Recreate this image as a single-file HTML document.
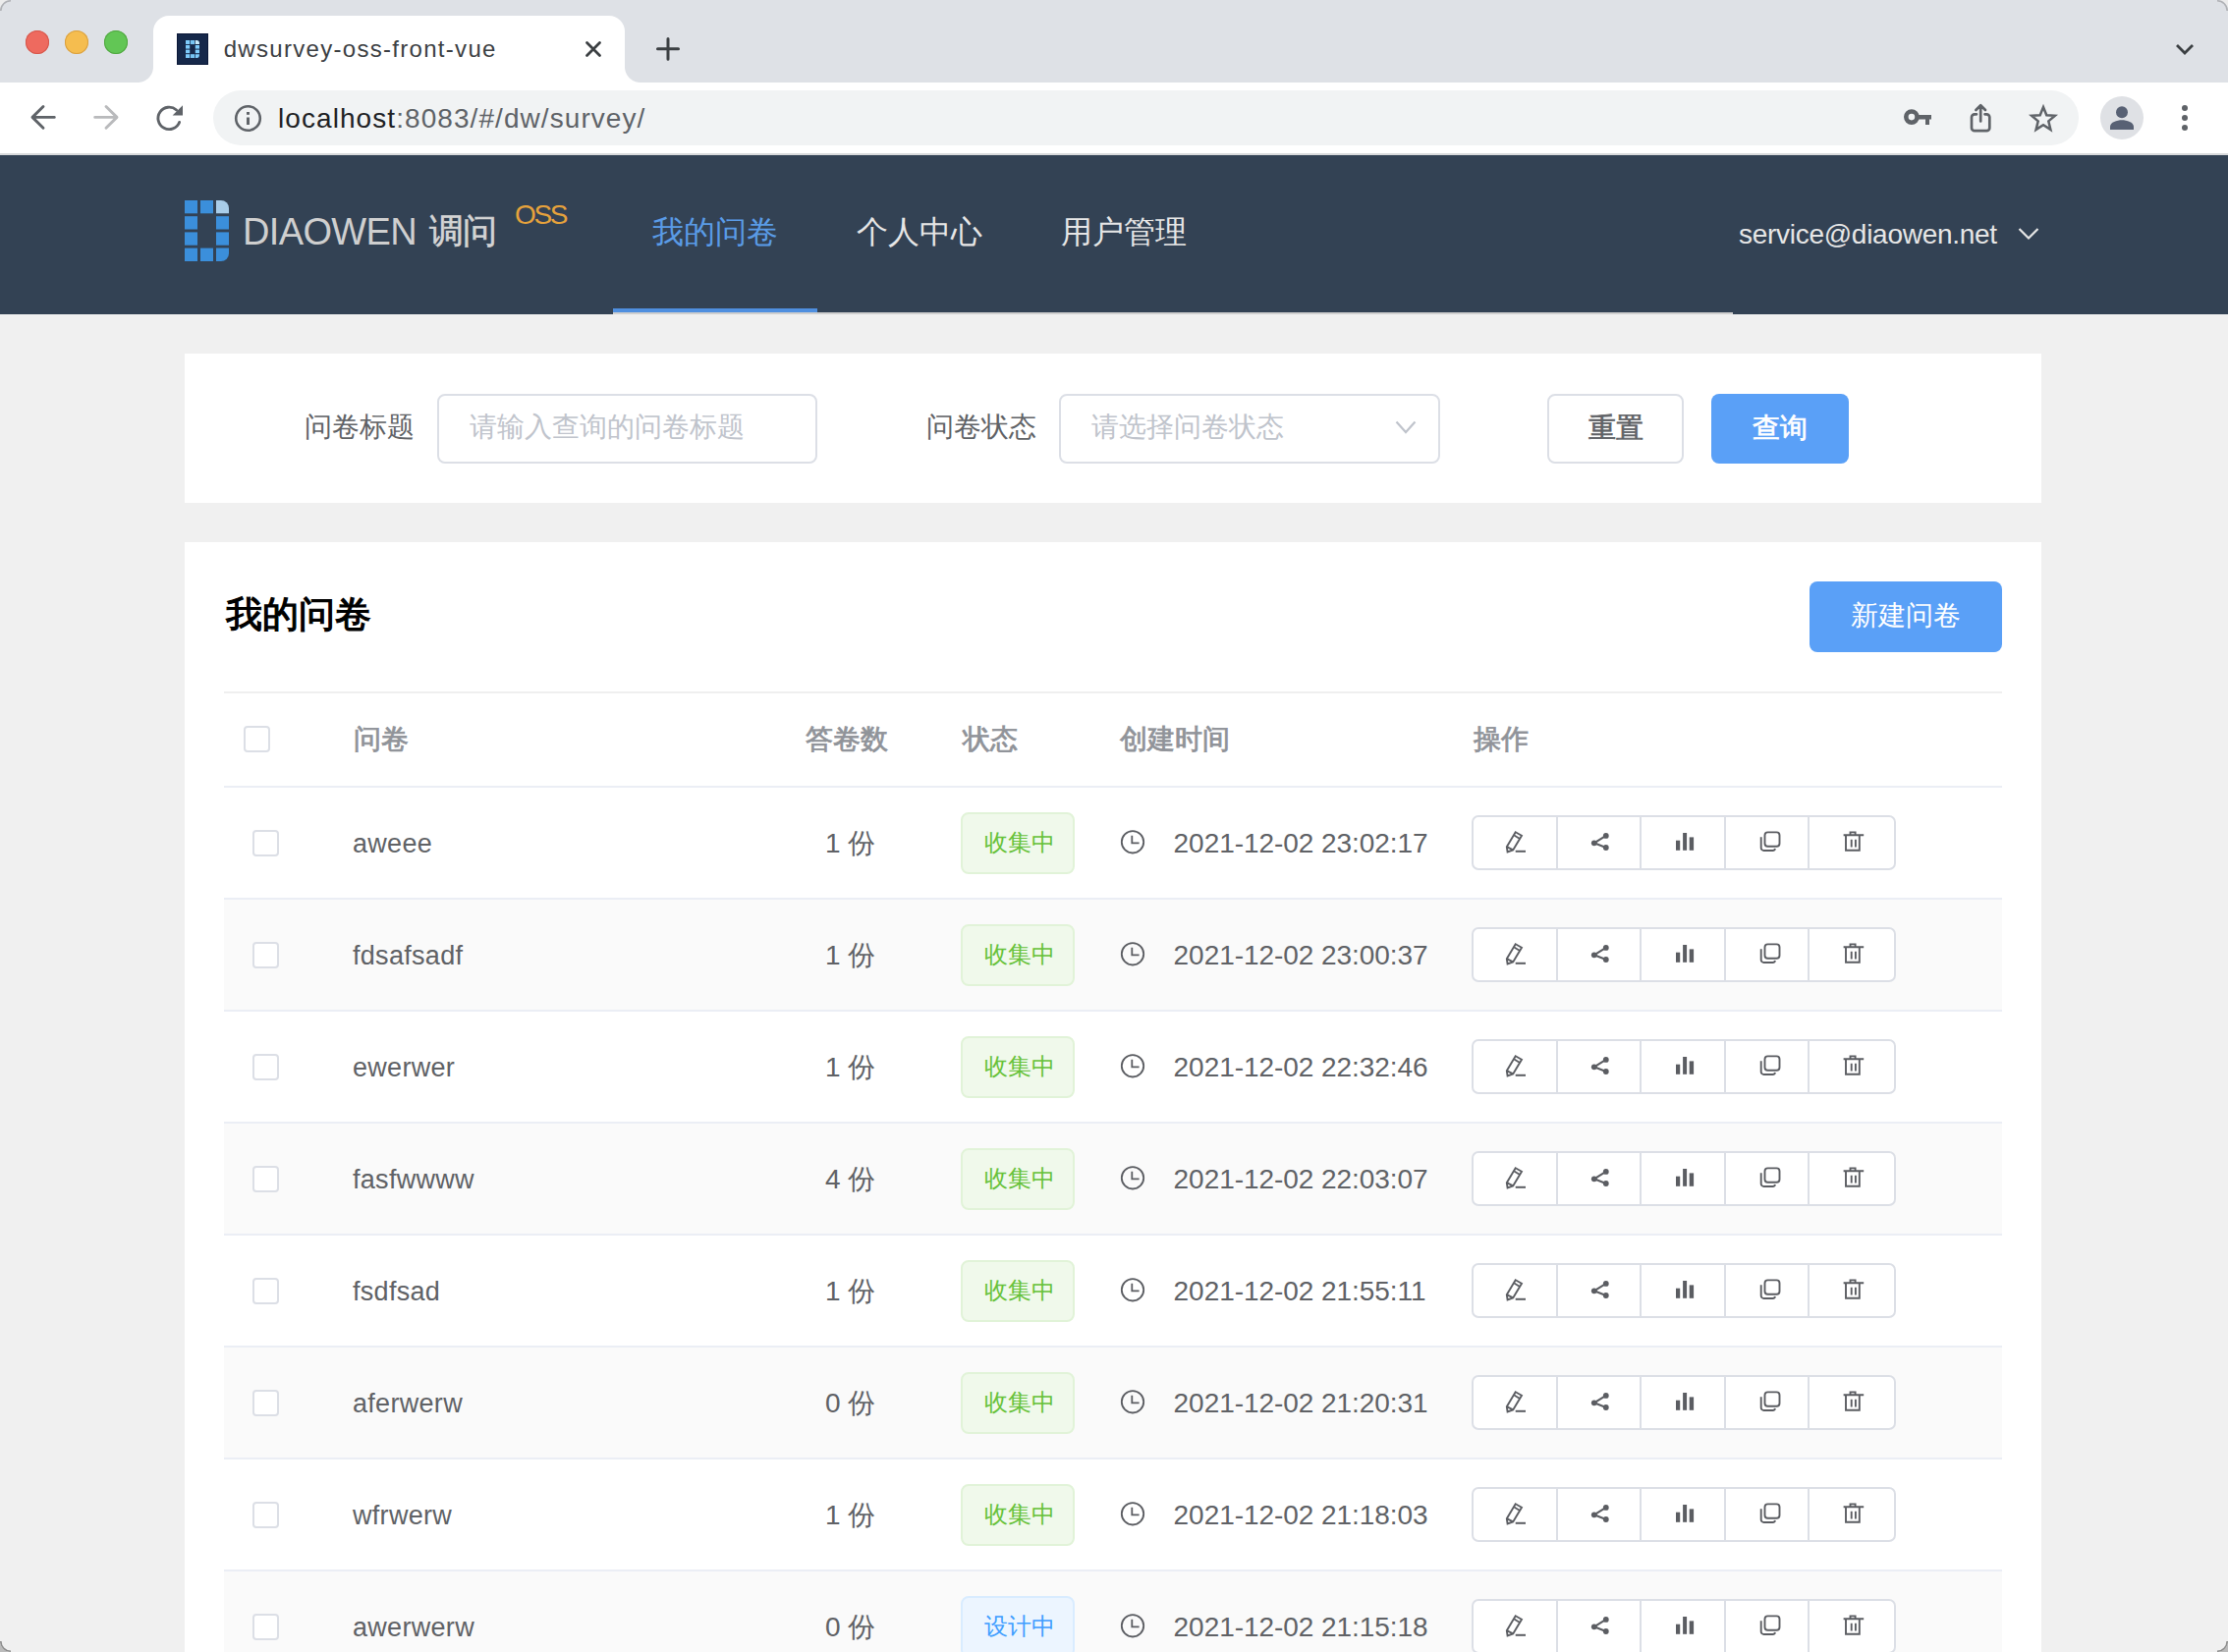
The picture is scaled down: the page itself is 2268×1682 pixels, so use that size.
<!DOCTYPE html>
<html><head><meta charset="utf-8">
<style>
*{box-sizing:border-box;margin:0;padding:0}
html,body{width:2268px;height:1682px;overflow:hidden;background:#f0f0f0;font-family:"Liberation Sans",sans-serif}
.a{position:absolute}
.t{white-space:nowrap}
.card{background:#fff}
.inp{border:2px solid #dcdfe6;border-radius:8px;background:#fff}
.row{left:228px;width:1810px;height:114px;border-bottom:2px solid #ebeef5}
.cb{width:27px;height:27px;border:2px solid #dcdfe6;border-radius:4px;background:#fff}
.tag{width:116px;height:63px;border-radius:8px;border:2px solid #e1f3d8;background:#f0f9eb}
.tag.b{border-color:#d9ecff;background:#ecf5ff}
.grp{width:432px;height:56px;border:2px solid #dcdfe6;border-radius:7px;background:#fff;display:flex}
.grp div{width:86px;border-right:2px solid #dcdfe6}
.grp div:last-child{border-right:none}

</style></head><body>

<div class="a" style="left:0;top:0;width:2268px;height:84px;background:#dee1e6"></div>
<div class="a" style="left:26px;top:31px;width:24px;height:24px;border-radius:50%;background:#ee6a5f;box-shadow:inset 0 0 0 1px #d5574c"></div>
<div class="a" style="left:66px;top:31px;width:24px;height:24px;border-radius:50%;background:#f5bd4f;box-shadow:inset 0 0 0 1px #d9a040"></div>
<div class="a" style="left:106px;top:31px;width:24px;height:24px;border-radius:50%;background:#62c655;box-shadow:inset 0 0 0 1px #50a640"></div>
<div class="a" style="left:156px;top:16px;width:480px;height:68px;background:#fff;border-radius:16px 16px 0 0"></div>
<div class="a" style="left:140px;top:68px;width:16px;height:16px;background:radial-gradient(circle at 0 0,#dee1e6 15.5px,#fff 16.5px)"></div>
<div class="a" style="left:636px;top:68px;width:16px;height:16px;background:radial-gradient(circle at 100% 0,#dee1e6 15.5px,#fff 16.5px)"></div>
<div class="a" style="left:180px;top:34px;width:32px;height:32px;background:#16284a;box-shadow:inset 0 0 0 1px #0b1838"></div>
<svg class="a" style="left:189px;top:40.8px" width="14" height="18.2" viewBox="0 0 14 18.2"><rect x="0" y="0" width="4.2" height="4.1" fill="#7ecbfb"/><rect x="4.9" y="0" width="4.2" height="4.1" fill="#77c4f3"/><path d="M9.8 0H11A3 3 0 0 1 14 3V4.1H9.8Z" fill="#c8ecfd"/><rect x="0" y="5" width="4.2" height="3.6" fill="#7ecbfb"/><rect x="9.8" y="5" width="4.2" height="3.6" fill="#7ecbfb"/><rect x="0" y="9.6" width="4.2" height="3.6" fill="#7ecbfb"/><rect x="9.8" y="9.6" width="4.2" height="3.6" fill="#7ecbfb"/><rect x="0" y="14.2" width="4.2" height="4" fill="#7ecbfb"/><rect x="4.9" y="14.2" width="4.2" height="4" fill="#77c4f3"/><path d="M9.8 14.2H14V15A3.2 3.2 0 0 1 10.8 18.2H9.8Z" fill="#7ecbfb"/></svg>
<div class="a t" style="left:227.7px;top:32.68px;font-size:24px;line-height:34px;color:#3c4043;letter-spacing:1.3px;font-weight:400;">dwsurvey-oss-front-vue</div>
<div class="a" style="left:0;top:84px;width:2268px;height:74px;background:#fff;border-bottom:2px solid #d9dadc"></div>
<div class="a" style="left:217px;top:92px;width:1899px;height:56px;background:#f1f3f4;border-radius:28px"></div>
<svg class="a" style="left:0;top:0" width="2268" height="160" viewBox="0 0 2268 160"><path d="M597.5 43.5L610.5 56.5M610.5 43.5L597.5 56.5" stroke="#3c4043" stroke-width="2.8" stroke-linecap="round"/><path d="M680 39.5V60.3M669.5 49.8H690.5" stroke="#3c4043" stroke-width="3" stroke-linecap="round"/><path d="M2216 46L2224 54L2232 46" fill="none" stroke="#3c4043" stroke-width="2.8"/><path d="M44 108.5L33 119.4L44 130.3M33.5 119.4H55.3" fill="none" stroke="#5f6368" stroke-width="2.9" stroke-linecap="round" stroke-linejoin="round"/><path d="M108 108.5L119 119.4L108 130.3M118.5 119.4H96.7" fill="none" stroke="#b9babc" stroke-width="2.9" stroke-linecap="round" stroke-linejoin="round"/><path d="M182.6 124.4A11.2 11.2 0 1 1 179.6 112" fill="none" stroke="#5f6368" stroke-width="2.9" stroke-linecap="round"/><path d="M186 107.3V117.6H175.6Z" fill="#5f6368"/></svg>
<svg class="a" style="left:238px;top:106px" width="29" height="29" viewBox="0 0 29 29"><circle cx="14.5" cy="14.5" r="12.3" fill="none" stroke="#5f6368" stroke-width="2.6"/><rect x="13" y="13.5" width="3" height="7.5" fill="#5f6368"/><rect x="13" y="8" width="3" height="2.8" fill="#5f6368"/></svg>
<div class="a t" style="left:283px;top:101.00px;font-size:28px;line-height:39px;color:#202124;letter-spacing:1.07px;font-weight:400;">localhost<span style="color:#5f6368">:8083/#/dw/survey/</span></div>
<svg class="a" style="left:1936px;top:106px" width="32" height="26" viewBox="0 0 32 26"><circle cx="9.9" cy="13.1" r="5.6" fill="none" stroke="#5f6368" stroke-width="4.6"/><path d="M15 10.9H30V15.5H28V20.9H24V15.5H15Z" fill="#5f6368"/></svg>
<svg class="a" style="left:2002px;top:104px" width="28" height="32" viewBox="0 0 28 32"><path d="M14.2 3.5V19.5M9.4 8L14.2 3.2L19 8M10 12.3H8A3 3 0 0 0 5 15.3V26.2A3 3 0 0 0 8 29.2H20.3A3 3 0 0 0 23.3 26.2V15.3A3 3 0 0 0 20.3 12.3H18.5" fill="none" stroke="#5f6368" stroke-width="2.7" stroke-linejoin="round" stroke-linecap="round"/></svg>
<svg class="a" style="left:2064px;top:104px" width="32" height="32" viewBox="0 0 32 32"><path d="M16 5L19.3 13.2L27.9 13.8L21.3 19.4L23.4 27.9L16 23.2L8.6 27.9L10.7 19.4L4.1 13.8L12.7 13.2Z" fill="none" stroke="#5f6368" stroke-width="2.5" stroke-linejoin="miter"/></svg>
<div class="a" style="left:2138px;top:98px;width:44px;height:44px;border-radius:50%;background:#dfe1e5"></div>
<svg class="a" style="left:2144px;top:104px" width="32" height="32" viewBox="0 0 32 32"><circle cx="16" cy="10.3" r="6" fill="#586174"/><path d="M4 28V25C4 20.3 11 18.2 16 18.2S28 20.3 28 25V28Z" fill="#586174"/></svg>
<div class="a" style="left:2221px;top:107px;width:6px;height:6px;border-radius:50%;background:#5f6368"></div>
<div class="a" style="left:2221px;top:117px;width:6px;height:6px;border-radius:50%;background:#5f6368"></div>
<div class="a" style="left:2221px;top:127px;width:6px;height:6px;border-radius:50%;background:#5f6368"></div>
<div class="a" style="left:0;top:158px;width:2268px;height:162px;background:#334254"></div>
<svg class="a" style="left:188px;top:204px" width="45" height="62" viewBox="0 0 45 62"><rect x="0" y="0" width="13" height="13.3" fill="#3b8fdb"/><rect x="16" y="0" width="13" height="13.3" fill="#3b8fdb"/><path d="M32 0H37A8 8 0 0 1 45 8V13.3H32Z" fill="#a9cde9"/><rect x="0" y="16.2" width="13" height="13.3" fill="#3b8fdb"/><rect x="32" y="16.2" width="13" height="13.3" fill="#3b8fdb"/><rect x="0" y="32.4" width="13" height="13.3" fill="#3b8fdb"/><rect x="32" y="32.4" width="13" height="13.3" fill="#3b8fdb"/><rect x="0" y="48.6" width="13" height="13.4" fill="#3b8fdb"/><rect x="16" y="48.6" width="13" height="13.4" fill="#3b8fdb"/><path d="M32 48.6H45V54A8 8 0 0 1 37 62H32Z" fill="#3b8fdb"/></svg>
<div class="a t" style="left:247px;top:210.33px;font-size:38px;line-height:53px;color:#cfcfcf;letter-spacing:-0.65px;font-weight:400;">DIAOWEN</div>
<div class="a t" style="left:437px;top:210.31px;font-size:35px;line-height:49px;color:#d4d4d4;letter-spacing:-1px;font-weight:400;-webkit-text-stroke:0.6px #d4d4d4">调问</div>
<div class="a t" style="left:524px;top:198.80px;font-size:28px;line-height:39px;color:#e6a23c;letter-spacing:-2.4px;font-weight:400;">OSS</div>
<div class="a" style="left:624px;top:318px;width:1140px;height:2px;background:#cfcfcf"></div>
<div class="a" style="left:624px;top:314px;width:208px;height:4px;background:#4f8fdf"></div>
<div class="a t" style="left:428px;width:600px;text-align:center;top:214.34px;font-size:32px;line-height:45px;color:#5a9be6;font-weight:400;">我的问卷</div>
<div class="a t" style="left:636px;width:600px;text-align:center;top:214.34px;font-size:32px;line-height:45px;color:#e6e6e6;font-weight:400;">个人中心</div>
<div class="a t" style="left:844px;width:600px;text-align:center;top:214.34px;font-size:32px;line-height:45px;color:#e6e6e6;font-weight:400;">用户管理</div>
<div class="a t" style="left:1770px;top:218.80px;font-size:28px;line-height:39px;color:#e6e6e6;letter-spacing:-0.28px;font-weight:400;">service@diaowen.net</div>
<svg class="a" style="left:2053px;top:230px" width="24" height="16" viewBox="0 0 24 16"><path d="M2.5 3L12 12.5L21.5 3" fill="none" stroke="#e6e6e6" stroke-width="2.2"/></svg>
<div class="a card" style="left:188px;top:360px;width:1890px;height:152px"></div>
<div class="a t" style="left:310px;top:415.04px;font-size:28px;line-height:39px;color:#606266;letter-spacing:0px;font-weight:400;">问卷标题</div>
<div class="a inp" style="left:444.5px;top:400.5px;width:387px;height:71px"></div>
<div class="a t" style="left:478px;top:415.04px;font-size:28px;line-height:39px;color:#c0c4cc;letter-spacing:0px;font-weight:400;">请输入查询的问卷标题</div>
<div class="a t" style="left:943px;top:415.04px;font-size:28px;line-height:39px;color:#606266;letter-spacing:0px;font-weight:400;">问卷状态</div>
<div class="a inp" style="left:1078px;top:400.5px;width:387.5px;height:71px"></div>
<div class="a t" style="left:1111px;top:415.04px;font-size:28px;line-height:39px;color:#c0c4cc;letter-spacing:0px;font-weight:400;">请选择问卷状态</div>
<svg class="a" style="left:1419px;top:426px" width="24" height="20" viewBox="0 0 24 20"><path d="M2.5 3.5L12 14L21.5 3.5" fill="none" stroke="#c0c4cc" stroke-width="2.2"/></svg>
<div class="a inp" style="left:1574.5px;top:400.5px;width:139.5px;height:71px"></div>
<div class="a t" style="left:1344.5px;width:600px;text-align:center;top:415.54px;font-size:28px;line-height:39px;color:#606266;font-weight:400;-webkit-text-stroke:0.7px #606266">重置</div>
<div class="a" style="left:1742px;top:400.5px;width:140px;height:71px;border-radius:8px;background:#5aa0f7"></div>
<div class="a t" style="left:1512px;width:600px;text-align:center;top:415.54px;font-size:28px;line-height:39px;color:#fff;font-weight:400;-webkit-text-stroke:0.7px #fff">查询</div>
<div class="a card" style="left:188px;top:552px;width:1890px;height:1130px"></div>
<div class="a t" style="left:230px;top:599.79px;font-size:36.5px;line-height:51px;color:#000;letter-spacing:0px;font-weight:400;-webkit-text-stroke:1.2px #000">我的问卷</div>
<div class="a" style="left:1842px;top:592px;width:196px;height:72px;border-radius:8px;background:#5aa0f7"></div>
<div class="a t" style="left:1640px;width:600px;text-align:center;top:607.04px;font-size:28px;line-height:39px;color:#fff;font-weight:400;">新建问卷</div>
<div class="a" style="left:228px;top:704px;width:1810px;height:2px;background:#efefef"></div>
<div class="a" style="left:228px;top:800px;width:1810px;height:2px;background:#ebeef5"></div>
<div class="a cb" style="left:248px;top:738.5px"></div>
<div class="a t" style="left:360px;top:733.04px;font-size:28px;line-height:39px;color:#909399;letter-spacing:0px;font-weight:400;-webkit-text-stroke:0.8px #909399">问卷</div>
<div class="a t" style="left:820px;top:733.04px;font-size:28px;line-height:39px;color:#909399;letter-spacing:0px;font-weight:400;-webkit-text-stroke:0.8px #909399">答卷数</div>
<div class="a t" style="left:980px;top:733.04px;font-size:28px;line-height:39px;color:#909399;letter-spacing:0px;font-weight:400;-webkit-text-stroke:0.8px #909399">状态</div>
<div class="a t" style="left:1140px;top:733.04px;font-size:28px;line-height:39px;color:#909399;letter-spacing:0px;font-weight:400;-webkit-text-stroke:0.8px #909399">创建时间</div>
<div class="a t" style="left:1500px;top:733.04px;font-size:28px;line-height:39px;color:#909399;letter-spacing:0px;font-weight:400;-webkit-text-stroke:0.8px #909399">操作</div>
<div class="a row" style="top:802px;background:#fff"></div>
<div class="a cb" style="left:256.5px;top:844.5px"></div>
<div class="a t" style="left:359px;top:839.64px;font-size:27px;line-height:38px;color:#606266;letter-spacing:0.3px;font-weight:400;">aweee</div>
<div class="a t" style="left:840px;top:838.80px;font-size:28px;line-height:39px;color:#606266;letter-spacing:0px;font-weight:400;">1</div>
<div class="a t" style="left:863px;top:839.04px;font-size:28px;line-height:39px;color:#606266;letter-spacing:0px;font-weight:400;">份</div>
<div class="a tag" style="left:978px;top:826.5px"></div>
<div class="a t" style="left:737.5px;width:600px;text-align:center;top:841.25px;font-size:24px;line-height:34px;color:#67c23a;font-weight:400;">收集中</div>
<svg class="a" style="left:1140px;top:844px" width="26" height="26" viewBox="0 0 26 26"><circle cx="13" cy="13.3" r="11.2" fill="none" stroke="#5b5d62" stroke-width="1.8"/><path d="M12.3 6.8V14.4H19.6" fill="none" stroke="#5b5d62" stroke-width="1.8"/></svg>
<div class="a t" style="left:1194.6px;top:838.80px;font-size:28px;line-height:39px;color:#606266;letter-spacing:-0.05px;font-weight:400;">2021-12-02 23:02:17</div>
<div class="a grp" style="left:1498px;top:830px"><div></div><div></div><div></div><div></div><div></div></div>
<svg class="a" style="left:1498px;top:830px" width="432" height="56" viewBox="0 0 432 56"><defs><g id="ops"><path d="M44.7 17.2L51 20.8L42.2 35.4L36.6 37.4L35.8 32.2Z M35.8 32.2L42.2 35.4 M42.6 20L48.7 23.7" fill="none" stroke="#5b5d62" stroke-width="1.9" stroke-linejoin="miter"/><path d="M44.7 36.8H55" stroke="#5b5d62" stroke-width="2"/><path d="M136.8 20.9L124.8 28.3L136.8 33" fill="none" stroke="#5b5d62" stroke-width="2"/><circle cx="136.8" cy="20.9" r="2.9" fill="#5b5d62"/><circle cx="124.8" cy="28.3" r="2.9" fill="#5b5d62"/><circle cx="136.8" cy="33" r="2.9" fill="#5b5d62"/><rect x="208" y="25.7" width="4.2" height="10.1" fill="#5b5d62"/><rect x="215.1" y="18" width="4" height="17.8" fill="#5b5d62"/><rect x="221.7" y="22.4" width="4.4" height="13.4" fill="#5b5d62"/><rect x="298.5" y="17.4" width="15" height="14.4" rx="3" fill="none" stroke="#5b5d62" stroke-width="1.9"/><path d="M294.7 22.3V33.2A2.8 2.8 0 0 0 297.5 36H306.5A2.5 2.5 0 0 0 309 34" fill="none" stroke="#5b5d62" stroke-width="1.9"/><path d="M378.6 20.2H399.2 M385.5 20.2V17.4H390.6V20.2 M381 20.2V35.8H394.8V20.2 M386.7 24.7V32.5M390.9 24.7V32.5" fill="none" stroke="#5b5d62" stroke-width="1.9"/></g></defs><use href="#ops"/></svg>
<div class="a row" style="top:916px;background:#fafafa"></div>
<div class="a cb" style="left:256.5px;top:958.5px"></div>
<div class="a t" style="left:359px;top:953.64px;font-size:27px;line-height:38px;color:#606266;letter-spacing:0.3px;font-weight:400;">fdsafsadf</div>
<div class="a t" style="left:840px;top:952.80px;font-size:28px;line-height:39px;color:#606266;letter-spacing:0px;font-weight:400;">1</div>
<div class="a t" style="left:863px;top:953.04px;font-size:28px;line-height:39px;color:#606266;letter-spacing:0px;font-weight:400;">份</div>
<div class="a tag" style="left:978px;top:940.5px"></div>
<div class="a t" style="left:737.5px;width:600px;text-align:center;top:955.25px;font-size:24px;line-height:34px;color:#67c23a;font-weight:400;">收集中</div>
<svg class="a" style="left:1140px;top:958px" width="26" height="26" viewBox="0 0 26 26"><circle cx="13" cy="13.3" r="11.2" fill="none" stroke="#5b5d62" stroke-width="1.8"/><path d="M12.3 6.8V14.4H19.6" fill="none" stroke="#5b5d62" stroke-width="1.8"/></svg>
<div class="a t" style="left:1194.6px;top:952.80px;font-size:28px;line-height:39px;color:#606266;letter-spacing:-0.05px;font-weight:400;">2021-12-02 23:00:37</div>
<div class="a grp" style="left:1498px;top:944px"><div></div><div></div><div></div><div></div><div></div></div>
<svg class="a" style="left:1498px;top:944px" width="432" height="56" viewBox="0 0 432 56"><use href="#ops"/></svg>
<div class="a row" style="top:1030px;background:#fff"></div>
<div class="a cb" style="left:256.5px;top:1072.5px"></div>
<div class="a t" style="left:359px;top:1067.64px;font-size:27px;line-height:38px;color:#606266;letter-spacing:0.3px;font-weight:400;">ewerwer</div>
<div class="a t" style="left:840px;top:1066.80px;font-size:28px;line-height:39px;color:#606266;letter-spacing:0px;font-weight:400;">1</div>
<div class="a t" style="left:863px;top:1067.04px;font-size:28px;line-height:39px;color:#606266;letter-spacing:0px;font-weight:400;">份</div>
<div class="a tag" style="left:978px;top:1054.5px"></div>
<div class="a t" style="left:737.5px;width:600px;text-align:center;top:1069.25px;font-size:24px;line-height:34px;color:#67c23a;font-weight:400;">收集中</div>
<svg class="a" style="left:1140px;top:1072px" width="26" height="26" viewBox="0 0 26 26"><circle cx="13" cy="13.3" r="11.2" fill="none" stroke="#5b5d62" stroke-width="1.8"/><path d="M12.3 6.8V14.4H19.6" fill="none" stroke="#5b5d62" stroke-width="1.8"/></svg>
<div class="a t" style="left:1194.6px;top:1066.80px;font-size:28px;line-height:39px;color:#606266;letter-spacing:-0.05px;font-weight:400;">2021-12-02 22:32:46</div>
<div class="a grp" style="left:1498px;top:1058px"><div></div><div></div><div></div><div></div><div></div></div>
<svg class="a" style="left:1498px;top:1058px" width="432" height="56" viewBox="0 0 432 56"><use href="#ops"/></svg>
<div class="a row" style="top:1144px;background:#fafafa"></div>
<div class="a cb" style="left:256.5px;top:1186.5px"></div>
<div class="a t" style="left:359px;top:1181.64px;font-size:27px;line-height:38px;color:#606266;letter-spacing:0.3px;font-weight:400;">fasfwwww</div>
<div class="a t" style="left:840px;top:1180.80px;font-size:28px;line-height:39px;color:#606266;letter-spacing:0px;font-weight:400;">4</div>
<div class="a t" style="left:863px;top:1181.04px;font-size:28px;line-height:39px;color:#606266;letter-spacing:0px;font-weight:400;">份</div>
<div class="a tag" style="left:978px;top:1168.5px"></div>
<div class="a t" style="left:737.5px;width:600px;text-align:center;top:1183.25px;font-size:24px;line-height:34px;color:#67c23a;font-weight:400;">收集中</div>
<svg class="a" style="left:1140px;top:1186px" width="26" height="26" viewBox="0 0 26 26"><circle cx="13" cy="13.3" r="11.2" fill="none" stroke="#5b5d62" stroke-width="1.8"/><path d="M12.3 6.8V14.4H19.6" fill="none" stroke="#5b5d62" stroke-width="1.8"/></svg>
<div class="a t" style="left:1194.6px;top:1180.80px;font-size:28px;line-height:39px;color:#606266;letter-spacing:-0.05px;font-weight:400;">2021-12-02 22:03:07</div>
<div class="a grp" style="left:1498px;top:1172px"><div></div><div></div><div></div><div></div><div></div></div>
<svg class="a" style="left:1498px;top:1172px" width="432" height="56" viewBox="0 0 432 56"><use href="#ops"/></svg>
<div class="a row" style="top:1258px;background:#fff"></div>
<div class="a cb" style="left:256.5px;top:1300.5px"></div>
<div class="a t" style="left:359px;top:1295.64px;font-size:27px;line-height:38px;color:#606266;letter-spacing:0.3px;font-weight:400;">fsdfsad</div>
<div class="a t" style="left:840px;top:1294.80px;font-size:28px;line-height:39px;color:#606266;letter-spacing:0px;font-weight:400;">1</div>
<div class="a t" style="left:863px;top:1295.04px;font-size:28px;line-height:39px;color:#606266;letter-spacing:0px;font-weight:400;">份</div>
<div class="a tag" style="left:978px;top:1282.5px"></div>
<div class="a t" style="left:737.5px;width:600px;text-align:center;top:1297.25px;font-size:24px;line-height:34px;color:#67c23a;font-weight:400;">收集中</div>
<svg class="a" style="left:1140px;top:1300px" width="26" height="26" viewBox="0 0 26 26"><circle cx="13" cy="13.3" r="11.2" fill="none" stroke="#5b5d62" stroke-width="1.8"/><path d="M12.3 6.8V14.4H19.6" fill="none" stroke="#5b5d62" stroke-width="1.8"/></svg>
<div class="a t" style="left:1194.6px;top:1294.80px;font-size:28px;line-height:39px;color:#606266;letter-spacing:-0.05px;font-weight:400;">2021-12-02 21:55:11</div>
<div class="a grp" style="left:1498px;top:1286px"><div></div><div></div><div></div><div></div><div></div></div>
<svg class="a" style="left:1498px;top:1286px" width="432" height="56" viewBox="0 0 432 56"><use href="#ops"/></svg>
<div class="a row" style="top:1372px;background:#fafafa"></div>
<div class="a cb" style="left:256.5px;top:1414.5px"></div>
<div class="a t" style="left:359px;top:1409.64px;font-size:27px;line-height:38px;color:#606266;letter-spacing:0.3px;font-weight:400;">aferwerw</div>
<div class="a t" style="left:840px;top:1408.80px;font-size:28px;line-height:39px;color:#606266;letter-spacing:0px;font-weight:400;">0</div>
<div class="a t" style="left:863px;top:1409.04px;font-size:28px;line-height:39px;color:#606266;letter-spacing:0px;font-weight:400;">份</div>
<div class="a tag" style="left:978px;top:1396.5px"></div>
<div class="a t" style="left:737.5px;width:600px;text-align:center;top:1411.25px;font-size:24px;line-height:34px;color:#67c23a;font-weight:400;">收集中</div>
<svg class="a" style="left:1140px;top:1414px" width="26" height="26" viewBox="0 0 26 26"><circle cx="13" cy="13.3" r="11.2" fill="none" stroke="#5b5d62" stroke-width="1.8"/><path d="M12.3 6.8V14.4H19.6" fill="none" stroke="#5b5d62" stroke-width="1.8"/></svg>
<div class="a t" style="left:1194.6px;top:1408.80px;font-size:28px;line-height:39px;color:#606266;letter-spacing:-0.05px;font-weight:400;">2021-12-02 21:20:31</div>
<div class="a grp" style="left:1498px;top:1400px"><div></div><div></div><div></div><div></div><div></div></div>
<svg class="a" style="left:1498px;top:1400px" width="432" height="56" viewBox="0 0 432 56"><use href="#ops"/></svg>
<div class="a row" style="top:1486px;background:#fff"></div>
<div class="a cb" style="left:256.5px;top:1528.5px"></div>
<div class="a t" style="left:359px;top:1523.64px;font-size:27px;line-height:38px;color:#606266;letter-spacing:0.3px;font-weight:400;">wfrwerw</div>
<div class="a t" style="left:840px;top:1522.80px;font-size:28px;line-height:39px;color:#606266;letter-spacing:0px;font-weight:400;">1</div>
<div class="a t" style="left:863px;top:1523.04px;font-size:28px;line-height:39px;color:#606266;letter-spacing:0px;font-weight:400;">份</div>
<div class="a tag" style="left:978px;top:1510.5px"></div>
<div class="a t" style="left:737.5px;width:600px;text-align:center;top:1525.25px;font-size:24px;line-height:34px;color:#67c23a;font-weight:400;">收集中</div>
<svg class="a" style="left:1140px;top:1528px" width="26" height="26" viewBox="0 0 26 26"><circle cx="13" cy="13.3" r="11.2" fill="none" stroke="#5b5d62" stroke-width="1.8"/><path d="M12.3 6.8V14.4H19.6" fill="none" stroke="#5b5d62" stroke-width="1.8"/></svg>
<div class="a t" style="left:1194.6px;top:1522.80px;font-size:28px;line-height:39px;color:#606266;letter-spacing:-0.05px;font-weight:400;">2021-12-02 21:18:03</div>
<div class="a grp" style="left:1498px;top:1514px"><div></div><div></div><div></div><div></div><div></div></div>
<svg class="a" style="left:1498px;top:1514px" width="432" height="56" viewBox="0 0 432 56"><use href="#ops"/></svg>
<div class="a row" style="top:1600px;background:#fafafa"></div>
<div class="a cb" style="left:256.5px;top:1642.5px"></div>
<div class="a t" style="left:359px;top:1637.64px;font-size:27px;line-height:38px;color:#606266;letter-spacing:0.3px;font-weight:400;">awerwerw</div>
<div class="a t" style="left:840px;top:1636.80px;font-size:28px;line-height:39px;color:#606266;letter-spacing:0px;font-weight:400;">0</div>
<div class="a t" style="left:863px;top:1637.04px;font-size:28px;line-height:39px;color:#606266;letter-spacing:0px;font-weight:400;">份</div>
<div class="a tag b" style="left:978px;top:1624.5px"></div>
<div class="a t" style="left:737.5px;width:600px;text-align:center;top:1639.25px;font-size:24px;line-height:34px;color:#409eff;font-weight:400;">设计中</div>
<svg class="a" style="left:1140px;top:1642px" width="26" height="26" viewBox="0 0 26 26"><circle cx="13" cy="13.3" r="11.2" fill="none" stroke="#5b5d62" stroke-width="1.8"/><path d="M12.3 6.8V14.4H19.6" fill="none" stroke="#5b5d62" stroke-width="1.8"/></svg>
<div class="a t" style="left:1194.6px;top:1636.80px;font-size:28px;line-height:39px;color:#606266;letter-spacing:-0.05px;font-weight:400;">2021-12-02 21:15:18</div>
<div class="a grp" style="left:1498px;top:1628px"><div></div><div></div><div></div><div></div><div></div></div>
<svg class="a" style="left:1498px;top:1628px" width="432" height="56" viewBox="0 0 432 56"><use href="#ops"/></svg>
<svg class="a" style="left:0;top:0" width="12" height="12"><path d="M0 0H12V0A11 11 0 0 0 0 12Z" fill="#ececec"/><path d="M0.8 11A10.2 10.2 0 0 1 11 0.8" fill="none" stroke="#b0b2b6" stroke-width="1.6"/></svg>
<svg class="a" style="left:2256px;top:0" width="12" height="12"><path d="M12 0H0A11 11 0 0 1 12 12Z" fill="#ececec"/><path d="M11.2 11A10.2 10.2 0 0 0 1 0.8" fill="none" stroke="#b0b2b6" stroke-width="1.6"/></svg>
<svg class="a" style="left:0;top:1670px" width="12" height="12"><path d="M0 12H12A11 11 0 0 1 0 0Z" fill="#bbbbbb"/><path d="M0.8 1A10.2 10.2 0 0 0 11 11.2" fill="none" stroke="#8e8e8e" stroke-width="1.6"/></svg>
<svg class="a" style="left:2256px;top:1670px" width="12" height="12"><path d="M12 12H0A11 11 0 0 0 12 0Z" fill="#bbbbbb"/><path d="M11.2 1A10.2 10.2 0 0 1 1 11.2" fill="none" stroke="#8e8e8e" stroke-width="1.6"/></svg>
</body></html>
